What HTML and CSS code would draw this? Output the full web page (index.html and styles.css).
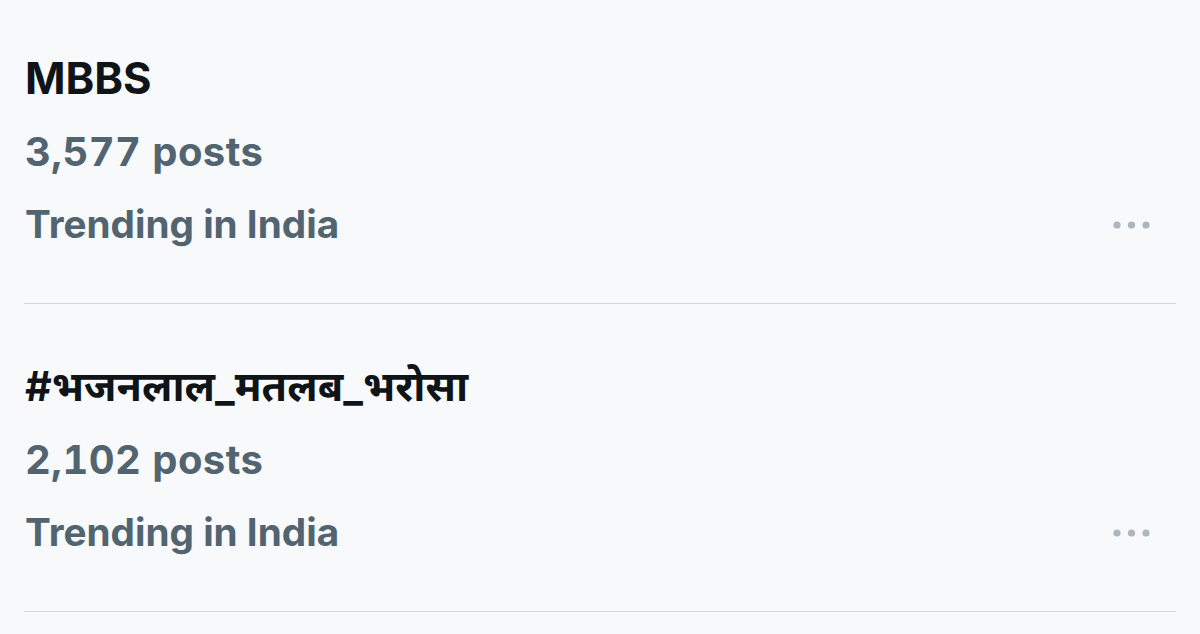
FILE: index.html
```html
<!DOCTYPE html>
<html lang="en">
  <head>
    <meta charset="UTF-8" />
    <meta name="viewport" content="width=device-width, initial-scale=1.0" />
    <title>Trends</title>
    <link rel="stylesheet" href="styles.css">
  </head>
  <body>
    <div class="trends">
      <div class="trend">
        <div class="trend-name">MBBS</div>
        <div class="trend-count">3,577 posts</div>
        <div class="trend-row">
          <span class="trend-meta">Trending in India</span>
          <button class="more" aria-label="More">
            <svg viewBox="0 0 40 10" width="40" height="10">
              <circle cx="5" cy="5" r="3.6" />
              <circle cx="19.5" cy="5" r="3.6" />
              <circle cx="34" cy="5" r="3.6" />
            </svg>
          </button>
        </div>
      </div>

      <div class="trend">
        <div class="trend-name hi" lang="hi">#भजनलाल_मतलब_भरोसा</div>
        <div class="trend-count">2,102 posts</div>
        <div class="trend-row">
          <span class="trend-meta">Trending in India</span>
          <button class="more" aria-label="More">
            <svg viewBox="0 0 40 10" width="40" height="10">
              <circle cx="5" cy="5" r="3.6" />
              <circle cx="19.5" cy="5" r="3.6" />
              <circle cx="34" cy="5" r="3.6" />
            </svg>
          </button>
        </div>
      </div>
    </div>
  </body>
</html>
```

FILE: styles.css
```css
* {
  box-sizing: border-box;
  margin: 0;
  padding: 0;
}

body,
html {
  height: 100%;
  font-family: Inter, "Noto Sans", sans-serif;
  background-color: #f8f9fa;
  overflow: hidden;
}

.trends {
  margin-top: -4px;
  padding: 0 24px;
}

.trend {
  padding: 46px 0 42px 1px;
  border-bottom: 1px solid #d4d8db;
}

.trend-name {
  font-size: 43.5px;
  font-weight: 700;
  line-height: 73px;
  color: #0f1419;
}

.trend-name.hi {
  font-size: 41.3px;
}

.trend-count,
.trend-meta {
  font-weight: 700;
  line-height: 73px;
  color: #536471;
}

.trend-count {
  font-size: 40px;
  font-feature-settings: "tnum";
  letter-spacing: 0.4px;
}

.trend-meta {
  font-size: 38.7px;
}

.trend-row {
  display: flex;
  justify-content: space-between;
  align-items: center;
}

.more {
  background: none;
  border: none;
  margin-right: 24px;
  display: flex;
  cursor: pointer;
}

.more svg {
  fill: #aab6c0;
}
```
